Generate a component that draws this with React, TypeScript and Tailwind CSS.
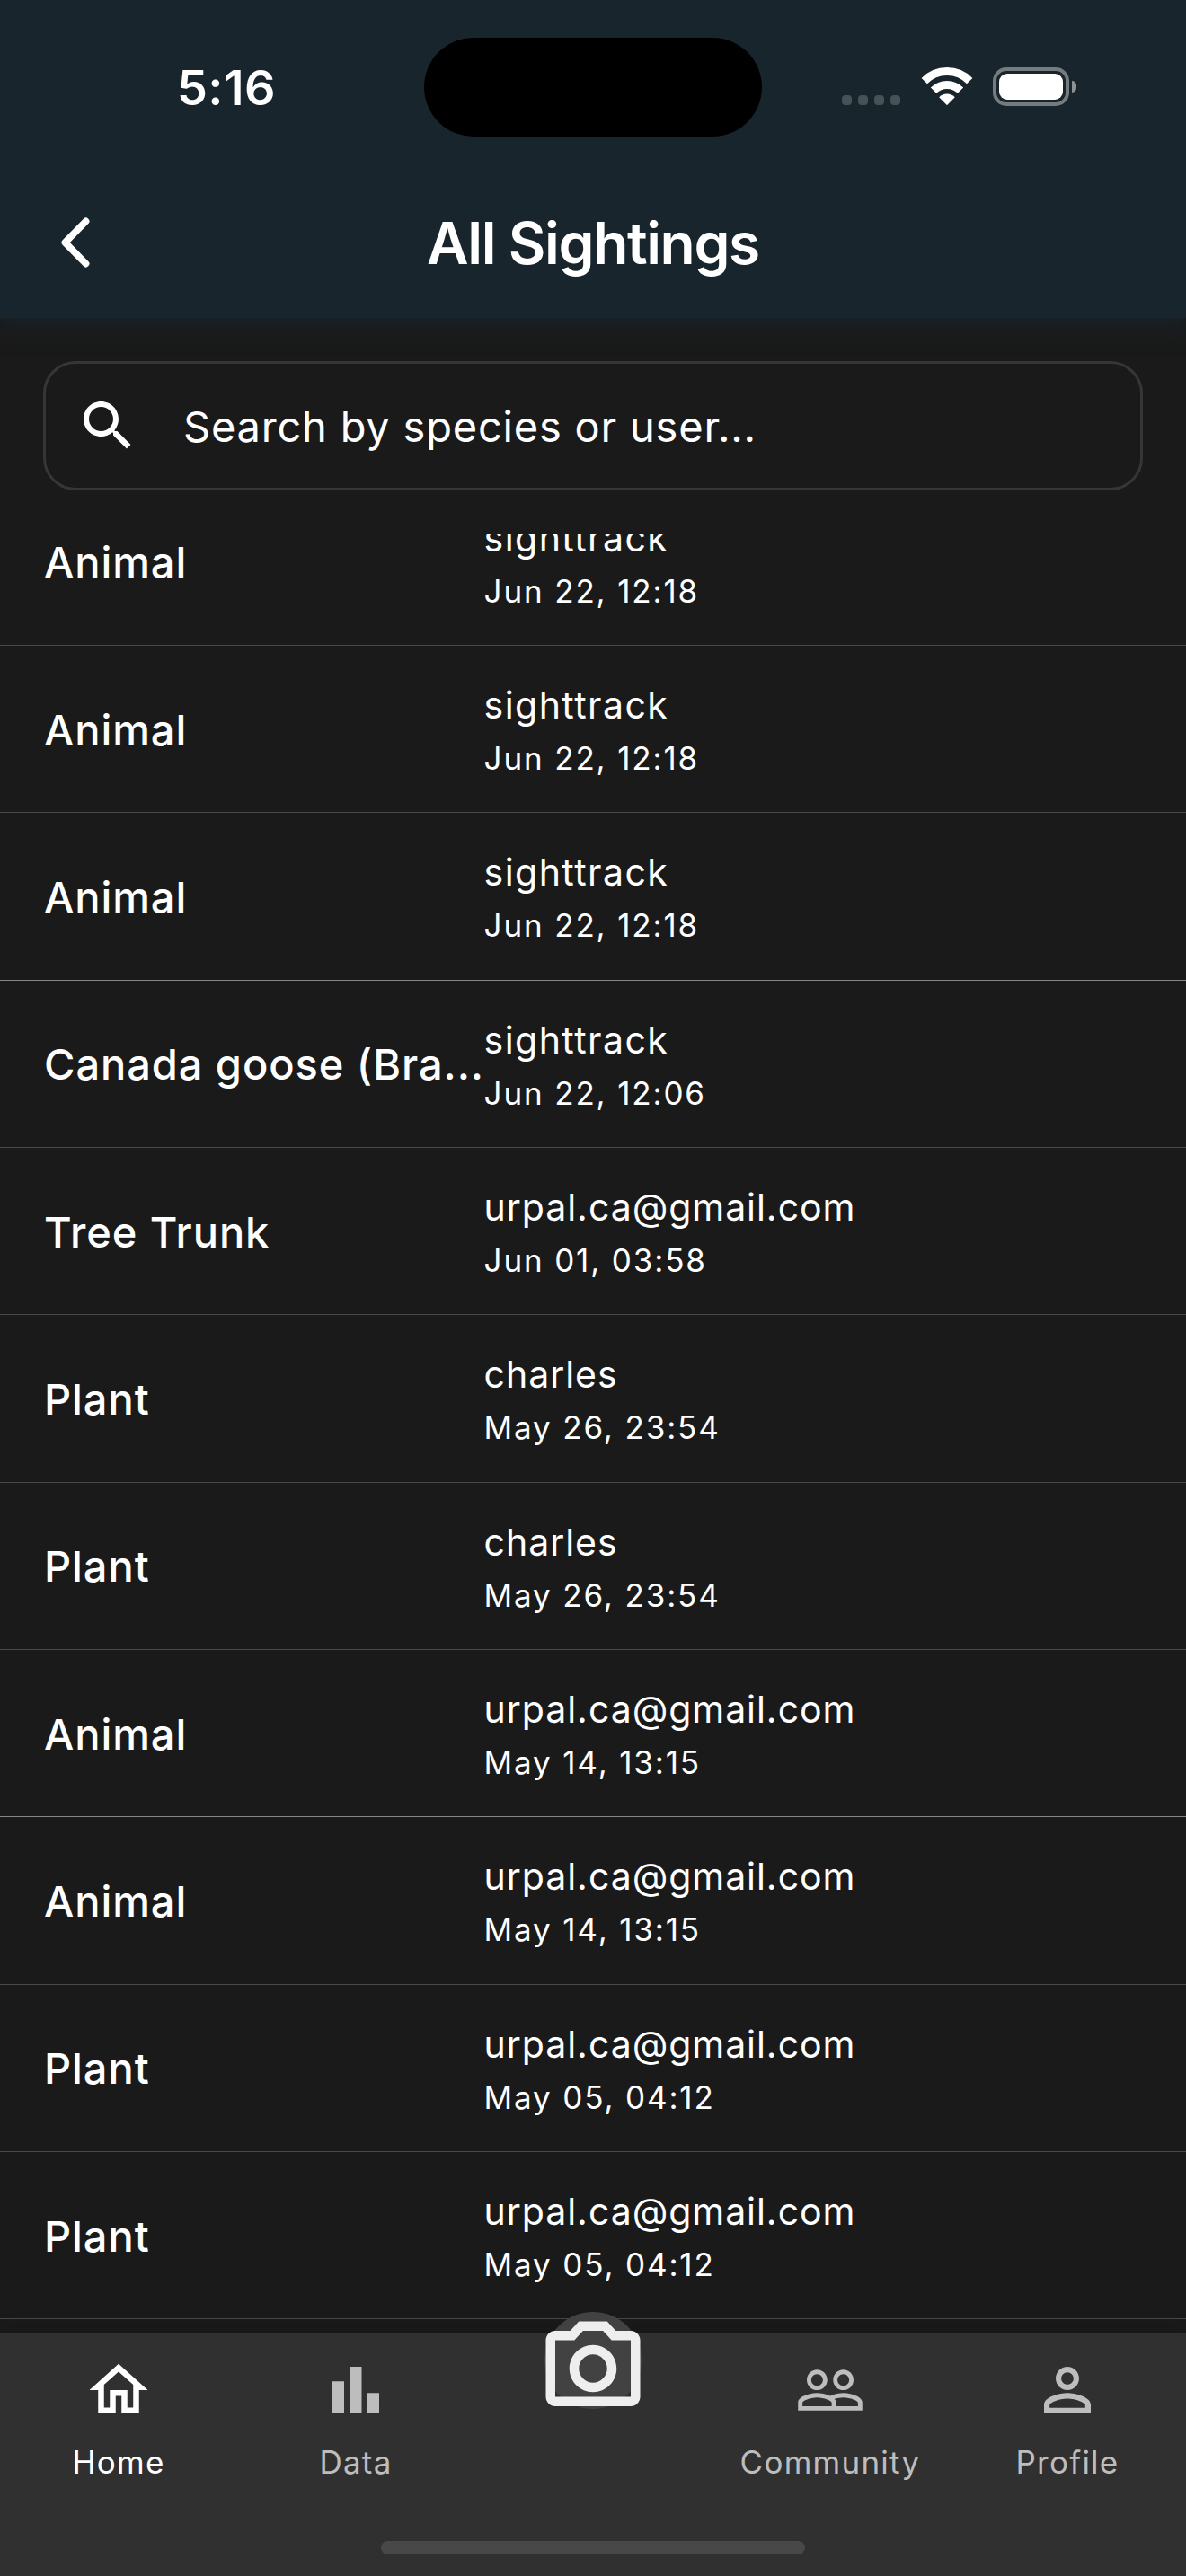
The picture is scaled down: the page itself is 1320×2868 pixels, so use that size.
import type { ReactNode } from "react";

type Sighting = {
  species: string;
  user: string;
  date: string;
};

const sightings: Sighting[] = [
  { species: "Animal", user: "sighttrack", date: "Jun 22, 12:18" },
  { species: "Animal", user: "sighttrack", date: "Jun 22, 12:18" },
  { species: "Animal", user: "sighttrack", date: "Jun 22, 12:18" },
  { species: "Canada goose (Bra...", user: "sighttrack", date: "Jun 22, 12:06" },
  { species: "Tree Trunk", user: "urpal.ca@gmail.com", date: "Jun 01, 03:58" },
  { species: "Plant", user: "charles", date: "May 26, 23:54" },
  { species: "Plant", user: "charles", date: "May 26, 23:54" },
  { species: "Animal", user: "urpal.ca@gmail.com", date: "May 14, 13:15" },
  { species: "Animal", user: "urpal.ca@gmail.com", date: "May 14, 13:15" },
  { species: "Plant", user: "urpal.ca@gmail.com", date: "May 05, 04:12" },
  { species: "Plant", user: "urpal.ca@gmail.com", date: "May 05, 04:12" },
];

const brightDividers = [2, 7];

function Icon({ d, className }: { d: string; className: string }) {
  return (
    <svg viewBox="0 0 24 24" fill="currentColor" className={className} aria-hidden="true">
      <path d={d} />
    </svg>
  );
}

const icons = {
  search:
    "M15.5 14h-.79l-.28-.27C15.41 12.59 16 11.11 16 9.5 16 5.91 13.09 3 9.5 3S3 5.91 3 9.5 5.91 16 9.5 16c1.61 0 3.09-.59 4.23-1.57l.27.28v.79l5 4.99L20.49 19l-4.99-5zm-6 0C7.01 14 5 11.99 5 9.5S7.01 5 9.5 5 14 7.01 14 9.5 11.99 14 9.5 14z",
  home: "M12 5.69l5 4.5V18h-2v-6H9v6H7v-7.81l5-4.5M12 3L2 12h3v8h6v-6h2v6h6v-8h3L12 3z",
  data: "M4 9h4v11H4zM16 13h4v7h-4zM10 4h4v16h-4z",
  community:
    "M16.5 13c-1.2 0-3.07.34-4.5 1-1.43-.67-3.3-1-4.5-1C5.33 13 1 14.08 1 16.25V19h22v-2.75c0-2.17-4.33-3.25-6.5-3.25zm-4 4.5h-10v-1.25c0-.54 2.56-1.75 5-1.75s5 1.21 5 1.75v1.25zm9 0H14v-1.25c0-.46-.2-.86-.52-1.22.88-.3 1.96-.53 3.02-.53 2.44 0 5 1.21 5 1.75v1.25zM7.5 12c1.93 0 3.5-1.57 3.5-3.5S9.43 5 7.5 5 4 6.57 4 8.5 5.57 12 7.5 12zm0-5.5c1.1 0 2 .9 2 2s-.9 2-2 2-2-.9-2-2 .9-2 2-2zm9 5.5c1.93 0 3.5-1.57 3.5-3.5S18.43 5 16.5 5 13 6.57 13 8.5s1.57 3.5 3.5 3.5zm0-5.5c1.1 0 2 .9 2 2s-.9 2-2 2-2-.9-2-2 .9-2 2-2z",
  profile:
    "M12 5.9c1.16 0 2.1.94 2.1 2.1s-.94 2.1-2.1 2.1S9.9 9.16 9.9 8s.94-2.1 2.1-2.1m0 9c2.97 0 6.1 1.46 6.1 2.1v1.1H5.9V17c0-.64 3.13-2.1 6.1-2.1M12 4C9.79 4 8 5.79 8 8s1.79 4 4 4 4-1.79 4-4-1.79-4-4-4zm0 9c-2.67 0-8 1.34-8 4v3h16v-3c0-2.66-5.33-4-8-4z",
  camera:
    "M14.12 4l1.83 2H20v12H4V6h4.05l1.83-2h4.24M15 2H9L7.17 4H4c-1.1 0-2 .9-2 2v12c0 1.1.9 2 2 2h16c1.1 0 2-.9 2-2V6c0-1.1-.9-2-2-2h-3.17L15 2zm-3 7c1.65 0 3 1.35 3 3s-1.35 3-3 3-3-1.35-3-3 1.35-3 3-3m0-2c-2.76 0-5 2.24-5 5s2.24 5 5 5 5-2.24 5-5-2.24-5-5-5z",
};

function StatusBar() {
  return (
    <div className="flex h-[186px] items-start">
      <div className="w-[472px] pt-[66px] pl-[197px] text-[54px] leading-[64px] font-semibold tracking-[0.3px]">
        5:16
      </div>
      <div className="mt-[42px] h-[110px] w-[376px] rounded-full bg-black" />
      <div className="mt-[75px] ml-[89px] flex h-[43px]">
        <div className="mt-[31px] flex gap-[7px]">
          <span className="size-[11px] rounded-[4px] bg-[#475257]" />
          <span className="size-[11px] rounded-[4px] bg-[#475257]" />
          <span className="size-[11px] rounded-[4px] bg-[#475257]" />
          <span className="size-[11px] rounded-[4px] bg-[#475257]" />
        </div>
        <svg viewBox="0 0 58 42" className="ml-[22.5px] h-[42px] w-[58px]" aria-hidden="true">
          <g fill="none" stroke="white" strokeWidth="9">
            <path d="M3.8 15.1A35.5 35.5 0 0 1 54.2 15.1" />
            <path d="M14 25.7A21 21 0 0 1 44 25.7" />
          </g>
          <path d="M29 42.2L20.2 33.2A12.4 12.4 0 0 1 37.8 33.2Z" fill="white" />
        </svg>
        <div className="ml-[22.5px] h-[43px] w-[85px] rounded-[15px] border-4 border-[#757c80] p-[3px]">
          <div className="h-[29px] w-[71px] rounded-[9px] bg-white" />
        </div>
        <div className="mt-[15px] ml-[3px] h-[13px] w-[5px] rounded-r-full bg-[#8c9295]" />
      </div>
    </div>
  );
}

function Header() {
  return (
    <header className="relative h-[354px] shrink-0 bg-[#19252c] shadow-[0_6px_24px_2px_rgba(25,37,44,0.85)]">
      <StatusBar />
      <div className="grid h-[168px] grid-cols-[1fr_auto_1fr] items-center">
        <svg viewBox="0 0 36 58" className="ml-[66px] h-[58px] w-[36px]" aria-hidden="true">
          <path
            d="M29.6 5.4L6.4 29L29.6 52.6"
            fill="none"
            stroke="white"
            strokeWidth="7.6"
            strokeLinecap="round"
            strokeLinejoin="round"
          />
        </svg>
        <h1 className="pt-px text-[64px] leading-[80px] font-semibold tracking-[-1.36px]">All Sightings</h1>
      </div>
    </header>
  );
}

function SearchBox() {
  return (
    <div className="mx-12 mt-12 flex h-36 shrink-0 items-center rounded-[36px] border-3 border-[#363636] pl-[33px]">
      <Icon d={icons.search} className="size-[72px]" />
      <span className="ml-12 pt-[2px] text-[47px] leading-[60px] tracking-[0.79px]">
        Search by species or user...
      </span>
    </div>
  );
}

function Row({ item, bright }: { item: Sighting; bright: boolean }) {
  return (
    <li
      className={`flex h-[186.33px] border-b px-12 ${bright ? "border-[#868686]" : "border-[#484848]"}`}
    >
      <div className="flex w-2/5 items-center pt-[2px] pl-px text-[47px] leading-[60px] font-medium tracking-[0.92px] whitespace-nowrap">
        {item.species}
      </div>
      <div className="w-3/5 pt-9 pl-px">
        <div
          className={`text-[41px] leading-[60px] ${
            item.user === "sighttrack" ? "tracking-[1.45px]" : "tracking-[0.95px]"
          }`}
        >
          {item.user}
        </div>
        <div className="text-[35px] leading-[58px] tracking-[1.85px]">{item.date}</div>
      </div>
    </li>
  );
}

function Tab({ d, label, active }: { d: string; label: string; active?: boolean }) {
  return (
    <div className={`flex flex-col items-center pt-6 ${active ? "text-white" : "text-[#bdbdbd]"}`}>
      <Icon d={d} className="size-[78px]" />
      <Label>{label}</Label>
    </div>
  );
}

function Label({ children }: { children: ReactNode }) {
  return <span className="mt-[17px] text-[35px] leading-[48px] tracking-[1.25px]">{children}</span>;
}

function BottomNav() {
  return (
    <nav className="relative h-[270px] shrink-0 bg-[#303030] shadow-[0_-4px_20px_rgba(0,0,0,0.15)]">
      <div className="grid grid-cols-5">
        <Tab d={icons.home} label="Home" active />
        <Tab d={icons.data} label="Data" />
        <div />
        <Tab d={icons.community} label="Community" />
        <Tab d={icons.profile} label="Profile" />
      </div>
      {/* The camera button rises above the top edge of the bar. */}
      <div className="absolute -top-6 left-1/2 size-[108px] -translate-x-1/2 rounded-full bg-[#424242]" />
      <Icon
        d={icons.camera}
        className="absolute top-[-24.5px] left-1/2 size-[126px] -translate-x-1/2 text-[#eeeeee]"
      />
      <div className="absolute bottom-6 left-1/2 h-[15px] w-[472px] -translate-x-1/2 rounded-full bg-[#484848]" />
    </nav>
  );
}

export default function App() {
  return (
    <div className="flex h-[2868px] w-[1320px] flex-col overflow-hidden bg-[#1a1a1a] font-['Inter',sans-serif] text-white">
      <Header />
      <SearchBox />
      <main className="mt-12 min-h-0 flex-1 overflow-hidden">
        <ul className="-mt-[61.33px]">
          {sightings.map((item, i) => (
            <Row key={i} item={item} bright={brightDividers.includes(i)} />
          ))}
        </ul>
      </main>
      <BottomNav />
    </div>
  );
}
